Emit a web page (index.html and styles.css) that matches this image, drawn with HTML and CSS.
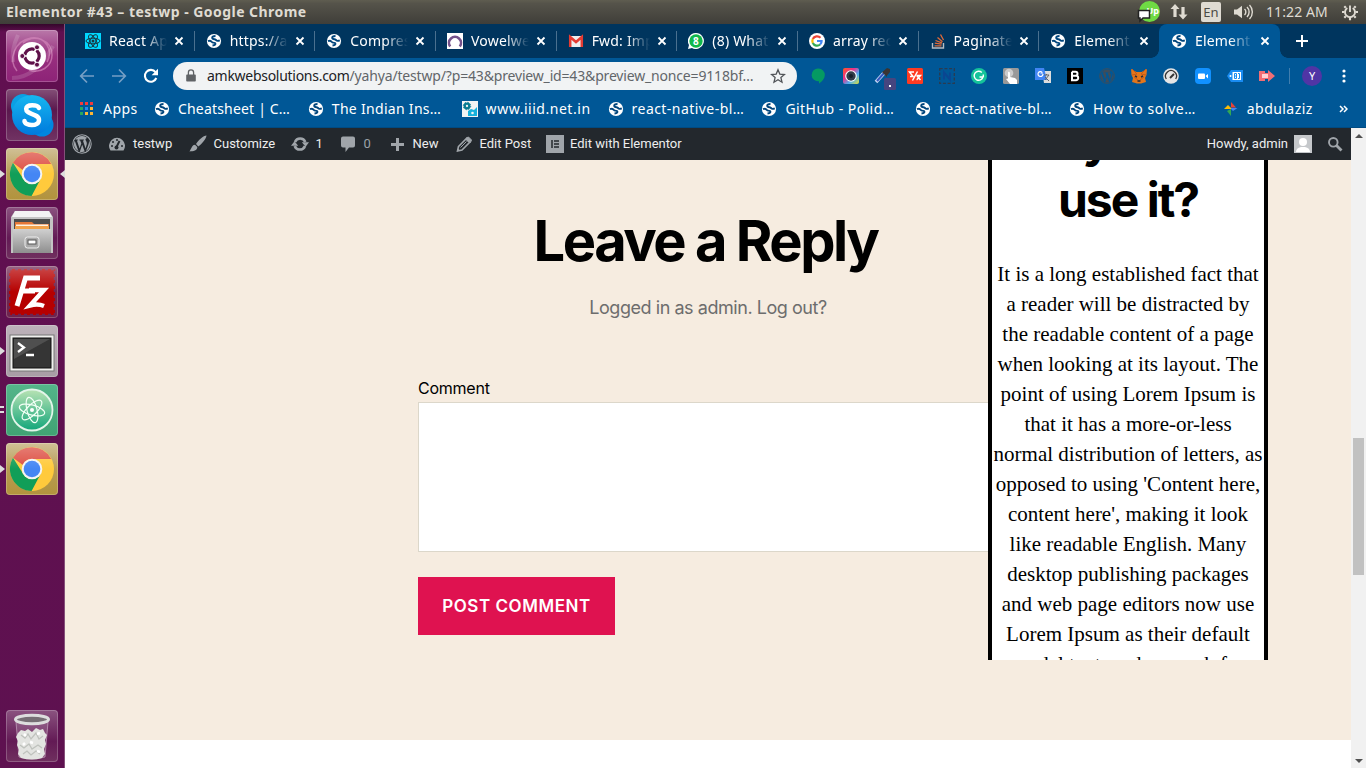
FILE: index.html
```html
<!DOCTYPE html>
<html lang="en">
<head>
<meta charset="utf-8">
<title>Elementor #43 – testwp</title>
<link rel="stylesheet" href="styles.css">
</head>
<body>
<svg class="defs" width="0" height="0">
  <defs>
    <linearGradient id="gloss" x1="0" y1="0" x2="0" y2="1"><stop offset="0" stop-color="#fff" stop-opacity=".3"/><stop offset=".5" stop-color="#fff" stop-opacity="0"/></linearGradient>
    <linearGradient id="sky" x1="0" y1="0" x2="0" y2="1"><stop offset="0" stop-color="#16b7f0"/><stop offset="1" stop-color="#0079dc"/></linearGradient>
    <linearGradient id="steel" x1="0" y1="0" x2="0" y2="1"><stop offset="0" stop-color="#d0d0d0"/><stop offset="1" stop-color="#8e8e8e"/></linearGradient>
    <linearGradient id="mint" x1="0" y1="0" x2="0" y2="1"><stop offset="0" stop-color="#b9e3b4"/><stop offset="1" stop-color="#12a67a"/></linearGradient>
    <linearGradient id="rainbow" x1="0" y1="0" x2="1" y2="1"><stop offset="0" stop-color="#ff5a1f"/><stop offset=".35" stop-color="#f02f86"/><stop offset=".65" stop-color="#48b0f5"/><stop offset="1" stop-color="#e6df35"/></linearGradient>
    <symbol id="globe" viewBox="0 0 16 16"><circle cx="8" cy="8" r="7.1" fill="#fff"/><path d="M2 8.200c1.700-.9 3-.4 3.500.500.500 1.100 1.700 1.200 2.800 1.200 1.200 0 1.400 1 .8 1.700-.6.7-1.700.8-2.600.9M9.500 3C8 3 6.200 3.400 6.200 4.800c0 1.200 1.300 1.400 2.300 1.400 1.300 0 1.600 1.500 3 1.700.8.1 1.600-.2 2.300-.500" fill="none" stroke="#00457c" stroke-width="1.900"/></symbol>
    <symbol id="close" viewBox="0 0 10 10"><path d="M1.500 1.500l7 7M8.500 1.500l-7 7" stroke="#fff" stroke-width="1.800"/></symbol>
    <symbol id="wp" viewBox="0 0 20 20"><circle cx="10" cy="10" r="9.200" fill="none" stroke="currentColor" stroke-width="1.100"/><path fill="currentColor" d="M10 2a8 8 0 0 0-6.700 3.600h2.500v.8h-.9l2.700 8 1.700-5-1.100-3h-.8v-.8h4.500v.8h-1l2.700 8 1-3.600c.6-2-.1-3-.8-4.200-.8-1.400.1-2.700 1.500-2.700A8 8 0 0 0 10 2zM2.700 6.600A8 8 0 0 0 6.500 17.200zM10.200 10.700l-2.400 7a8 8 0 0 0 4.900-.1zM17 6.200c.3 1.700-.1 3-.7 4.700l-2.300 6A8 8 0 0 0 17 6.200z"/></symbol>
    <symbol id="chrome" viewBox="0 0 52 52"><circle cx="26" cy="26" r="22" fill="#ffca3c"/><path d="M7 14.800A22 22 0 0 1 45.200 16H26a10 10 0 0 0-9.200 6z" fill="#dd4f43"/><path d="M7 14.800A22 22 0 0 0 25.600 48l9-17a10 10 0 0 1-17.500-.2z" fill="#119e58"/><circle cx="26" cy="26" r="10.300" fill="#f4f4f4"/><circle cx="26" cy="26" r="8.300" fill="#4486f4"/></symbol>
  </defs>
</svg>

<div class="desktop">
  <header class="panel">
    <span class="window-title">Elementor #43 – testwp - Google Chrome</span>
    <div class="indicators">
      <svg class="ind-up" viewBox="0 0 24 24"><circle cx="12.500" cy="11.500" r="10.500" fill="#6fda44"/><text x="9.500" y="14" class="up-text">Up</text><path d="M1.500 10.500h11v7.500H6l-3 3v-3H1.500z" fill="#fff" stroke="#222" stroke-width="1.500"/></svg>
      <svg class="ind-net" viewBox="0 0 20 20" fill="#dfdbd2"><path d="M6 2l4.500 5H7.600v8H4.400V7H1.500zM14 17.500l4.500-5h-2.900V5h-3.200v7.500H9.500z"/></svg>
      <span class="ind-lang">En</span>
      <svg class="ind-vol" viewBox="0 0 22 18"><path d="M1 6.500h3L9 2.800v12.400L4 11.500H1z" fill="#dfdbd2"/><path d="M11.500 6a4 4 0 0 1 0 6M14 4a7 7 0 0 1 0 10M16.500 2a10 10 0 0 1 0 14" fill="none" stroke="#dfdbd2" stroke-width="1.400"/></svg>
      <span class="clock">11:22 AM</span>
      <svg class="ind-gear" viewBox="0 0 18 18" fill="none" stroke="#dfdbd2"><path d="M6.300 5A5 5 0 1 0 11.700 5M9 2.500V9" stroke-width="1.900"/><path d="M3.300 3.300l1.500 1.500M14.700 3.300l-1.500 1.500M1 9h2.500M14.500 9H17M3.300 14.700l1.500-1.500M14.700 14.700l-1.500-1.500M9 14v3.300" stroke-width="2.100"/></svg>
    </div>
  </header>

  <aside class="launcher">
    <div class="tile ubuntu"><svg viewBox="0 0 52 52"><path d="M11 41C2 30 8 11 25 8c14-2 23 12 16 24M17 13c11-10 29-3 29 12 0 12-12 19-23 15" fill="none" stroke="#d58abd" stroke-opacity=".65" stroke-width="1.500"/><path d="M6 48Q30 48 47 16M12 5q-7 15-5 27" fill="none" stroke="#fff" stroke-opacity=".14" stroke-width="4"/><circle cx="26" cy="26" r="14" fill="#fff"/><circle cx="26" cy="26" r="7.200" fill="none" stroke="#5e1049" stroke-width="3.200"/><path d="M26 26L12 26M26 26L33 14M26 26L33 38" stroke="#fff" stroke-width="1.600"/><circle cx="26" cy="26" r="5" fill="#fff"/><g fill="#5e1049" stroke="#fff" stroke-width=".9"><circle cx="16.300" cy="26" r="2.500"/><circle cx="31" cy="17.300" r="2.500"/><circle cx="31" cy="34.700" r="2.500"/></g></svg></div>
    <div class="tile skype"><svg viewBox="0 0 52 52"><circle cx="17" cy="17" r="12" fill="#0ba0e4"/><circle cx="36" cy="36" r="11.500" fill="#0086df"/><circle cx="26" cy="26" r="20" fill="url(#sky)"/><path d="M33 19c-1.500-3.200-12.500-4.200-12.800 1C20 26 33 24 33 31c0 7-14 6.300-14.500 1" fill="none" stroke="#fff" stroke-width="4.500" stroke-linecap="round"/></svg></div>
    <div class="tile gold"><svg viewBox="0 0 52 52"><use href="#chrome"/><rect width="52" height="52" fill="url(#gloss)"/></svg><i class="run"></i><i class="focus"></i></div>
    <div class="tile files"><svg viewBox="0 0 52 52"><path d="M9 4h34l4 6v36H5V10z" fill="#c4c4c4"/><path d="M9 4h34l3 6H6z" fill="#f3f3f3"/><path d="M8 12h36v12H8z" fill="#4d4d4d"/><path d="M9 15h17l2 2h15v8H9z" fill="#e47737"/><path d="M10 17.500h32v6H10z" fill="#fff3e2"/><path d="M9 19h34v4H9z" fill="#f2a34c"/><path d="M7 22h38v24H7z" fill="url(#steel)"/><rect x="19" y="30" width="14" height="11" rx="2.500" fill="#aaa" stroke="#eee"/><rect x="22" y="33" width="8" height="4" fill="#fff" stroke="#555"/></svg></div>
    <div class="tile zilla"><svg viewBox="0 0 52 52"><path d="M3 3h46v46H3z" fill="#b60000" stroke="#6e244f" stroke-width="2.500" stroke-dasharray="3 3"/><path d="M34 12H19.500L11 40M15 25h14" fill="none" stroke="#fff" stroke-width="5"/><path d="M23 24h15L24 39.500q8-2 14 .5" fill="none" stroke="#fff" stroke-width="4.500"/><rect width="52" height="52" fill="url(#gloss)"/></svg></div>
    <div class="tile term"><svg viewBox="0 0 52 52"><rect x="4" y="10" width="44" height="36" fill="#f0f0ee" stroke="#777"/><rect x="7" y="13" width="38" height="30" fill="#353535" stroke="#111"/><path d="M8 14h36L8 34z" fill="#fff" fill-opacity=".13"/><path d="M12 18l6 4.500-6 4.500M20 30h8" fill="none" stroke="#fff" stroke-width="2.300"/></svg><i class="run"></i></div>
    <div class="tile atom"><svg viewBox="0 0 52 52"><circle cx="26" cy="26" r="20.500" fill="url(#mint)" stroke="#e2f5e9" stroke-width="1.800"/><g fill="none" stroke="#f1fff5" stroke-width="1.200"><ellipse cx="26" cy="26" rx="13" ry="5" transform="rotate(15 26 26)"/><ellipse cx="26" cy="26" rx="13" ry="5" transform="rotate(75 26 26)"/><ellipse cx="26" cy="26" rx="13" ry="5" transform="rotate(-45 26 26)"/></g><circle cx="26" cy="26" r="2" fill="#fff"/></svg><i class="pair"></i></div>
    <div class="tile gold"><svg viewBox="0 0 52 52"><use href="#chrome"/><rect width="52" height="52" fill="url(#gloss)"/></svg><i class="run"></i></div>
    <div class="tile trash"><svg viewBox="0 0 52 52"><path d="M10 12l3 35q13 4 26 0l3-35z" fill="#fff" fill-opacity=".14" stroke="#d4b7ce" stroke-opacity=".6"/><path d="M12 23l3-3 4 1 3-2 4 3 4-4 4 2 3-1 2 4 2 2-2 5 1 4-2 5 1 5-3 4q-10 3-21 0l-3-4 1-4-2-5 1-4-2-4z" fill="#e3e4e1"/><path d="M15 25l4 3 3-4 3 5 5-6 3 6 4-3M14 35l4 3 5-4 3 5 6-4 4 3M17 44l4-3 4 4 5-4 4 3" fill="none" stroke="#bfc2bd" stroke-width="1.300"/><path d="M18 24l2 2M31 24l3-1M19 33l-2 2M31 41l3 1M24 32l3 1" stroke="#fff" stroke-width="2.500"/><ellipse cx="26" cy="9.500" rx="16.500" ry="4.200" fill="#766e74" stroke="#ddd" stroke-width="3"/></svg></div>
  </aside>

  <main class="browser">
    <nav class="tabs">
      <div class="tab"><svg class="fav" viewBox="0 0 16 16"><path fill="#00d8ff" d="M0 0h16v16H0z"/><g fill="none" stroke="#183642" stroke-width="1"><ellipse cx="8" cy="8" rx="7" ry="2.800"/><ellipse cx="8" cy="8" rx="7" ry="2.800" transform="rotate(60 8 8)"/><ellipse cx="8" cy="8" rx="7" ry="2.800" transform="rotate(120 8 8)"/></g><circle cx="8" cy="8" r="1.500" fill="#183642"/></svg><span>React Ap</span><svg class="x"><use href="#close"/></svg></div>
      <div class="tab"><svg class="fav"><use href="#globe"/></svg><span>https://a</span><svg class="x"><use href="#close"/></svg></div>
      <div class="tab"><svg class="fav"><use href="#globe"/></svg><span>Compres</span><svg class="x"><use href="#close"/></svg></div>
      <div class="tab"><svg class="fav" viewBox="0 0 16 16"><path fill="#fff" d="M0 0h16v16H0z"/><path d="M3.200 13.500A6 6 0 1 1 12.800 13.500" fill="none" stroke="#75528b" stroke-width="2.600"/></svg><span>Vowelwe</span><svg class="x"><use href="#close"/></svg></div>
      <div class="tab"><svg class="fav" viewBox="0 0 16 16"><path fill="#eee" d="M1 3h14v11H1z"/><path d="M2.200 14V4L8 9l5.800-5v10" fill="none" stroke="#e53b32" stroke-width="2.500"/></svg><span>Fwd: Imp</span><svg class="x"><use href="#close"/></svg></div>
      <div class="tab"><svg class="fav" viewBox="0 0 16 16"><path d="M8 0a8 8 0 1 1-4 15L0 16l1-4A8 8 0 0 1 8 0z" fill="#fff"/><circle cx="8" cy="8" r="6.700" fill="#10b84b"/><text x="5" y="11.500" class="badge-eight">8</text></svg><span>(8) What</span><svg class="x"><use href="#close"/></svg></div>
      <div class="tab"><svg class="fav" viewBox="0 0 16 16"><circle cx="8" cy="8" r="8" fill="#fff"/><g fill="none" stroke-width="2.200"><path d="M11.500 4.800A4.700 4.700 0 0 0 3.800 6" stroke="#ea4335"/><path d="M3.800 6a4.700 4.700 0 0 0 0 4" stroke="#fbbc05"/><path d="M3.800 10a4.700 4.700 0 0 0 7.300 1.500" stroke="#34a853"/><path d="M11.100 11.500A4.500 4.500 0 0 0 12.600 8H8" stroke="#4285f4"/></g></svg><span>array rec</span><svg class="x"><use href="#close"/></svg></div>
      <div class="tab"><svg class="fav" viewBox="0 0 16 16" fill="none"><path d="M2.500 10v5h11v-5" stroke="#b6bcc2" stroke-width="1.400"/><path d="M4.500 12.800h7M4.800 10.200l6.800.9M5.500 7.500l6.400 2.300M7.500 4.500l5 4.200M10.500 1.500l3 5.500" stroke="#e06a38" stroke-width="1.300"/></svg><span>Paginate</span><svg class="x"><use href="#close"/></svg></div>
      <div class="tab"><svg class="fav"><use href="#globe"/></svg><span>Element</span><svg class="x"><use href="#close"/></svg></div>
      <div class="tab active"><svg class="fav"><use href="#globe"/></svg><span>Element</span><svg class="x"><use href="#close"/></svg></div>
      <svg class="plus" viewBox="0 0 12 12"><path d="M6 0v12M0 6h12" stroke="#fff" stroke-width="2"/></svg>
    </nav>

    <div class="toolbar">
      <svg class="nav" viewBox="0 0 16 16"><path d="M15 8H2M8 1.500L1.700 8 8 14.500" fill="none" stroke="#759fc5" stroke-width="1.700"/></svg>
      <svg class="nav" viewBox="0 0 16 16"><path d="M1 8h13M8 1.500L14.300 8 8 14.500" fill="none" stroke="#759fc5" stroke-width="1.700"/></svg>
      <svg class="nav" viewBox="0 0 16 16"><path d="M13.300 10A5.900 5.900 0 1 1 12.500 4.200" fill="none" stroke="#fff" stroke-width="2.100"/><path d="M15 .8v6.400H8.600z" fill="#fff"/></svg>
      <div class="omnibox">
        <svg class="lock" viewBox="0 0 10 14"><path d="M1 5.500h8a.8.8 0 0 1 .8.800v5.400a.8.8 0 0 1-.8.800H1a.8.8 0 0 1-.8-.8V6.300a.8.8 0 0 1 .8-.8z" fill="#606366"/><path d="M2.400 6V3.500a2.600 2.600 0 0 1 5.200 0V6" fill="none" stroke="#606366" stroke-width="1.300"/></svg>
        <span class="url"><b>amkwebsolutions.com</b>/yahya/testwp/?p=43&amp;preview_id=43&amp;preview_nonce=9118bf…</span>
        <svg class="star" viewBox="0 0 16 16"><path d="M8 1.800l1.800 4.300 4.700.4-3.600 3.100 1.100 4.600L8 11.800l-4 2.400 1.100-4.600-3.600-3.100 4.700-.4z" fill="none" stroke="#505357" stroke-width="1.300"/></svg>
      </div>
      <div class="extensions">
        <svg viewBox="0 0 16 16"><path d="M7.500.5a6.300 6.300 0 0 1 6.300 6.500c0 3.800-3 6.500-5.800 8.700v-2.500A6.400 6.400 0 1 1 7.500.5z" fill="#059a62"/></svg>
        <svg viewBox="0 0 16 16"><rect width="16" height="16" rx="2" fill="url(#rainbow)"/><circle cx="8" cy="8" r="5.800" fill="#fff"/><circle cx="8" cy="8" r="4.700" fill="#333d4a"/><circle cx="8" cy="8" r="2" fill="#17202b"/></svg>
        <svg viewBox="0 0 16 16"><path d="M1 14L9 5" stroke="#c9d8f5" stroke-width="3.500"/><path d="M2 13l7-8" stroke="#3458bd" stroke-width="2"/><path d="M7 4l1.500-1L12 0l3 1v3l-3 3.500v1.500z" fill="#3a3432"/><rect x="9" y="10" width="12" height="12" rx="1.500" fill="#46457f"/><path d="M14 17h2v2h-2z" fill="#fff"/></svg>
        <svg viewBox="0 0 16 16"><rect width="16" height="16" rx="1.500" fill="#ff3b22"/><path d="M7 4H2.500l3.500 4.500H3M5.500 12.500l5-9M9.500 7.500h4l-3.500 4h-.500M10 8l3.500 4" fill="none" stroke="#fff" stroke-width="1.500"/></svg>
        <svg viewBox="0 0 16 16"><path d="M.7.700h14.600v14.600H.7z" fill="none" stroke="#2a3b50" stroke-width="1.300" stroke-dasharray="3 1.700"/><path d="M5 11.500V4.500l6 7v-7" fill="none" stroke="#0a4691" stroke-width="2"/></svg>
        <svg viewBox="0 0 16 16"><circle cx="8" cy="8" r="8" fill="#15c39a"/><path d="M10.800 4.500A4.500 4.500 0 1 0 12 9H8.500M12.300 6.500V9" fill="none" stroke="#fff" stroke-width="1.400"/></svg>
        <svg viewBox="0 0 16 16"><rect width="16" height="16" rx="1.500" fill="#999"/><circle cx="6" cy="5" r="4.300" fill="#ccc"/><path d="M5 4q1.500-1 2 1v4l5 1 2 2v4H7L3 11l2-.5z" fill="#fff"/></svg>
        <svg viewBox="0 0 16 16"><path fill="#ddd" d="M7 3h9v12H9z"/><path fill="#4285f4" d="M0 0h9l3 12H0z"/><path d="M8 5H5.500M7 4A2.500 2.500 0 1 0 8 6" fill="none" stroke="#fff" stroke-width="1.200"/><path d="M9 7h5M11.500 6v1M10 12l4-5M10 9l4 4" stroke="#666"/></svg>
        <svg viewBox="0 0 16 16"><path d="M0 0h16v16H0z"/><path d="M5 3.800h3.500a2 2 0 0 1 0 4H5m0 0h4a2.200 2.200 0 0 1 0 4.400H5zV3.800" fill="none" stroke="#fff" stroke-width="2"/></svg>
        <svg class="wp-dim"><use href="#wp"/></svg>
        <svg viewBox="0 0 16 16"><path d="M0 1l5.500 3h5L16 1l-.5 6-1.500 3 1 4-5 1.500H6L1 14l1-4L.5 7z" fill="#e2761b"/><path d="M1 1l5 5-5 1M15 1l-5 5 5 1M3 9l4 3M13 9l-4 3" fill="none" stroke="#c95a16"/><path d="M4 8l2 1M12 8l-2 1M6.500 13h3" stroke="#252a3a" stroke-width="1.400"/></svg>
        <svg viewBox="0 0 16 16"><circle cx="8" cy="8" r="7.800" fill="#e5e5e5"/><path d="M3.300 11A5.500 5.500 0 1 1 12.700 11" fill="none" stroke="#333" stroke-width="1.300"/><path d="M7 10l4-4" stroke="#333" stroke-width="2"/></svg>
        <svg viewBox="0 0 16 16"><rect width="16" height="16" rx="4" fill="#1191ff"/><rect x="3" y="5.500" width="7" height="5.500" rx="1" fill="#fff"/><path d="M10.500 8L13 6v4.500z" fill="#fff"/></svg>
        <svg viewBox="0 0 16 16"><path d="M4 2h12v12H4L0 8z" fill="#198cf2"/><path fill="#fff" d="M5.500 4H14v8H5.500z"/><path d="M7.500 5.500h2v5h-2zM7.500 8h2M11 5.500h1.500v5H11" fill="none" stroke="#198cf2"/><circle cx="3.500" cy="8" r="1" fill="#fff"/></svg>
        <svg viewBox="0 0 16 16"><path fill="#f26e75" d="M0 3h6v2h3V2l7 6-7 6v-3H6v2H0z"/><path d="M3 6h6v4H3z" fill="#ffd0d2"/></svg>
      </div>
      <span class="avatar">Y</span>
      <svg class="kebab" viewBox="0 0 4 14" fill="#fff"><circle cx="2" cy="2" r="1.600"/><circle cx="2" cy="7" r="1.600"/><circle cx="2" cy="12" r="1.600"/></svg>
    </div>

    <div class="bookmarks">
      <a class="bm b0"><svg viewBox="0 0 16 16"><path fill="#f23b3b" d="M1 1h3v3H1zM6 1h3v3H6zM11 1h3v3h-3z"/><path fill="#28a75d" d="M1 6h3v3H1zM1 11h3v3H1z"/><path fill="#2588ef" d="M6 6h3v3H6z"/><path fill="#fbb636" d="M11 6h3v3h-3zM6 11h3v3H6zM11 11h3v3h-3z"/></svg><span>Apps</span></a>
      <a class="bm b1"><svg><use href="#globe"/></svg><span>Cheatsheet | C…</span></a>
      <a class="bm b2"><svg><use href="#globe"/></svg><span>The Indian Ins…</span></a>
      <a class="bm b3"><svg viewBox="0 0 16 16"><path fill="#f3f3f3" d="M0 0h16v16H0z"/><circle cx="5" cy="5" r="2.300" fill="none" stroke="#087b92" stroke-width="2.300"/><circle cx="5" cy="5" r="3.700" fill="none" stroke="#087b92" stroke-width="1" stroke-dasharray="1.400 1.500"/><path d="M6 10l3-2 3 1 3-3v9H6z" fill="#16b1dc"/><circle cx="10.500" cy="12" r="1.300" fill="#f3f3f3"/></svg><span>www.iiid.net.in</span></a>
      <a class="bm b4"><svg><use href="#globe"/></svg><span>react-native-bl…</span></a>
      <a class="bm b5"><svg><use href="#globe"/></svg><span>GitHub - Polid…</span></a>
      <a class="bm b6"><svg><use href="#globe"/></svg><span>react-native-bl…</span></a>
      <a class="bm b7"><svg><use href="#globe"/></svg><span>How to solve…</span></a>
      <a class="bm b8"><svg viewBox="0 0 16 16"><path fill="#ea4335" d="M8 1l5 5.500H8z"/><path fill="#4285f4" d="M8 7h6.500L10 10 8 8z"/><path fill="#34a853" d="M8 8v7L4 10z"/><path fill="#fbbc05" d="M1 8l4-4 3 3v1z"/></svg><span>abdulaziz</span></a>
      <svg class="more" viewBox="0 0 9 8"><path d="M1 1l3 3-3 3M5 1l3 3-3 3" fill="none" stroke="#fff" stroke-width="1.500"/></svg>
    </div>

    <div class="viewport">
      <div class="site">
        <div class="adminbar">
          <a class="ab a0"><svg viewBox="0 0 20 20"><use href="#wp"/></svg></a>
          <a class="ab a1"><svg viewBox="0 0 20 20"><path d="M3.500 16.500A8 8 0 1 1 16.500 16.500z" fill="currentColor"/><path d="M9 14l3.500-7" stroke="#23282d" stroke-width="2"/><g fill="#23282d"><circle cx="9.500" cy="13.500" r="2"/><circle cx="5" cy="12" r="1"/><circle cx="6" cy="8" r="1"/><circle cx="10" cy="6" r="1"/><circle cx="15" cy="12" r="1"/></g></svg><span>testwp</span></a>
          <a class="ab a2"><svg viewBox="0 0 20 20" fill="currentColor"><path d="M18.500 1.500c-3 0-8.500 5-10.500 8.500l2.300 2.400c3.500-2.400 8-7.400 8.200-10.900zM7 10.800c-3 0-3 3-5.500 6.700 4 0 7.800-.7 7.800-4.400z"/></svg><span>Customize</span></a>
          <a class="ab a3"><svg viewBox="0 0 20 20"><path d="M5 8A5.500 5.500 0 0 1 15.300 8M15 12A5.500 5.500 0 0 1 4.700 12" fill="none" stroke="currentColor" stroke-width="2.600"/><path fill="currentColor" d="M11.800 8.300h7.200l-3.300 4.500zM1 11.700h7.200L4.500 7.200z"/></svg><span>1</span></a>
          <a class="ab a4"><svg viewBox="0 0 20 20"><path d="M5 2.500h10a2 2 0 0 1 2 2v7a2 2 0 0 1-2 2h-4L7.500 18v-4.500H5a2 2 0 0 1-2-2v-7a2 2 0 0 1 2-2z" fill="currentColor"/></svg><span>0</span></a>
          <a class="ab a5"><svg viewBox="0 0 20 20"><path d="M10.500 4v13M4 10.500h13" stroke="currentColor" stroke-width="3"/></svg><span>New</span></a>
          <a class="ab a6"><svg viewBox="0 0 20 20"><path d="M4.500 12.500l7.500-7.500 3.500 3.500-7.500 7.500-4.500 1z" fill="none" stroke="currentColor" stroke-width="1.600"/><path d="M12 4l4.500 4.500 1-2.500-3-3zM6.500 13.500l6-6" fill="currentColor" stroke="currentColor"/><path d="M3 17.500l3-1-2-2z" fill="currentColor"/></svg><span>Edit Post</span></a>
          <a class="ab a7"><svg viewBox="0 0 18 18"><path fill="currentColor" d="M0 0h18v18H0z"/><path d="M6 5v8M8 6h5M8 9h5M8 12h5" stroke="#23282d" stroke-width="1.500"/></svg><span>Edit with Elementor</span></a>
          <div class="account"><span>Howdy, admin</span><svg class="person" viewBox="0 0 18 18"><path fill="#c5c8cb" d="M0 0h18v18H0z"/><circle cx="9" cy="7" r="4" fill="#fff"/><path d="M2 17q0-4 5-5h4q5 1 5 5z" fill="#fff"/></svg><svg class="search" viewBox="0 0 16 16" fill="none" stroke="#a0a5aa"><circle cx="6.300" cy="6.300" r="4.300" stroke-width="1.900"/><path d="M9.500 9.500l5 5" stroke-width="2.800"/></svg></div>
        </div>
        <div class="page">
          <section class="reply">
            <h2>Leave a Reply</h2>
            <p class="logged">Logged in as admin. Log out?</p>
            <label>Comment</label>
            <div class="textarea"></div>
            <span class="submit">POST COMMENT</span>
          </section>
          <section class="about">
            <h2>Why do we<br>use it?</h2>
            <p>It is a long established fact that<br>a reader will be distracted by<br>the readable content of a page<br>when looking at its layout. The<br>point of using Lorem Ipsum is<br>that it has a more-or-less<br>normal distribution of letters, as<br>opposed to using 'Content here,<br>content here', making it look<br>like readable English. Many<br>desktop publishing packages<br>and web page editors now use<br>Lorem Ipsum as their default<br>model text, and a search for</p>
          </section>
        </div>
      </div>
      <div class="scrollbar"><i class="up"></i><i class="thumb"></i><i class="down"></i></div>
    </div>
  </main>
</div>
</body>
</html>
```
FILE: styles.css
```css
* { box-sizing: border-box; }
body { margin: 0; overflow: hidden; background: #fff; }
svg { display: block; flex: none; }
.defs { position: absolute; }
.desktop { display: grid; grid-template: 24px 744px / 65px 1301px; width: 1366px; height: 768px; overflow: hidden; }

/* top panel */
.panel { grid-column: 1 / 3; display: flex; justify-content: space-between; align-items: center; padding: 0 6px; background: linear-gradient(#5f5d50, #55534a 15%, #3f3e39); color: #dfdbd2; font: 14px/24px "Noto Sans", sans-serif; }
.window-title { font-weight: 700; font-size: 14px; letter-spacing: .46px; white-space: nowrap; }
.indicators { display: flex; align-items: center; }
.ind-up { width: 24px; height: 24px; margin-right: 8px; }
.up-text { font: 700 9px "Noto Sans", sans-serif; fill: #fff; }
.ind-net { width: 20px; height: 20px; margin-right: 12px; }
.ind-lang { width: 20px; height: 20px; margin-right: 12px; border-radius: 2px; background: #dfdbd2; color: #4c4b45; font-size: 13px; line-height: 20px; text-align: center; }
.ind-vol { width: 22px; height: 18px; margin-right: 11px; }
.clock { width: 62px; margin-right: 13px; white-space: nowrap; font-size: 14px; letter-spacing: .1px; }
.ind-gear { width: 18px; height: 18px; margin-right: 1px; }

/* launcher */
.launcher { display: flex; flex-direction: column; gap: 7px; padding: 6px 7px 6px 6px; background: linear-gradient(#35072b, #610f50 8px, #5e1150); border-right: 1px solid #85507a; }
.tile { position: relative; width: 52px; height: 52px; flex: none; border-radius: 4px; box-shadow: inset 0 0 0 1px rgba(255,255,255,.22); }
.tile svg { width: 52px; height: 52px; border-radius: 4px; }
.ubuntu { background: linear-gradient(#b978a9, #98307f 50%, #8d2377); }
.skype { background: linear-gradient(#845078, #5b184e 40%, #713363); }
.gold { background: linear-gradient(#bda669, #b2933d); }
.files, .trash { background: linear-gradient(#8b5380, #631a55 60%, #70305f); }
.zilla { background: #6e244f; }
.term { background: linear-gradient(#bdb2ba, #a89da5); }
.atom { background: linear-gradient(#54b58a, #40a273); }
.trash { margin-top: auto; }
.run, .focus { position: absolute; top: 22px; border: 4px solid transparent; }
.run { left: -6px; border-left: 5px solid #ddd; border-right: 0; }
.focus { right: -7px; border-right: 5px solid #ddd; border-left: 0; }
.pair { position: absolute; left: -6px; top: 22px; width: 4px; height: 7px; border: solid #ddd; border-width: 2px 0; }

/* browser chrome */
.browser { display: grid; grid-template-rows: 34px 36px 34px 640px; min-width: 0; background: #005796; color: #fff; font: 14px "Noto Sans", sans-serif; }
.tabs { display: flex; padding-left: 8px; background: #00355e; }
.tab { position: relative; flex: none; display: flex; align-items: center; width: 120.67px; padding-left: 12px; }
.tab::after { content: ""; position: absolute; right: -1px; top: 7px; width: 1px; height: 20px; background: #4a708f; }
.tab:nth-child(9)::after, .tab.active::after { display: none; }
.tab .fav { width: 16px; height: 16px; margin-right: 8px; }
.tab span { width: 58px; height: 24px; line-height: 23px; margin-right: 7px; overflow: hidden; white-space: nowrap; letter-spacing: .2px; -webkit-mask-image: linear-gradient(90deg, #000 60%, transparent); mask-image: linear-gradient(90deg, #000 60%, transparent); }
.tab .x { width: 10px; height: 10px; }
.tab.active { background: #005796; border-radius: 8px 8px 0 0; }
.tab.active::before { content: ""; position: absolute; left: -8px; right: -8px; bottom: 0; height: 8px; background: radial-gradient(circle at 0 0, transparent 7.500px, #005796 8px) left / 8px 8px no-repeat, radial-gradient(circle at 100% 0, transparent 7.500px, #005796 8px) right / 8px 8px no-repeat; }
.badge-eight { font: 700 10px "Noto Sans", sans-serif; fill: #fff; }
.plus { width: 12px; height: 12px; margin: 11px 0 0 16px; }
.toolbar { display: flex; align-items: center; padding-left: 14px; }
.nav { width: 16px; height: 16px; margin-right: 16px; }
.nav:nth-child(3) { margin-right: 14px; }
.omnibox { display: flex; align-items: center; width: 624px; height: 28px; border-radius: 14px; padding: 0 11px 0 13px; background: #f1f3f4; color: #62666a; }
.lock { width: 10px; height: 14px; margin-right: 11px; }
.url { width: 560px; white-space: nowrap; line-height: 24px; letter-spacing: -.17px; }
.url b { color: #202124; font-weight: 400; letter-spacing: -.28px; }
.star { width: 16px; height: 16px; margin-left: 3px; }
.extensions { display: flex; gap: 16px; margin-left: 14px; }
.extensions svg { width: 16px; height: 16px; overflow: visible; }
.wp-dim { color: #3d4d5b; }
.avatar { position: relative; width: 20px; height: 20px; margin-left: 27px; border-radius: 50%; background: #5035a5; font-size: 11px; line-height: 20px; text-align: center; }
.avatar::before { content: ""; position: absolute; left: -13px; top: 2px; width: 1px; height: 16px; background: #417eae; }
.kebab { width: 4px; height: 14px; margin-left: 20px; }
.bookmarks { display: flex; align-items: center; padding: 0 0 3px 14px; border-bottom: 1px solid #004b83; }
.bm { display: flex; align-items: center; flex: none; width: 153.800px; white-space: nowrap; line-height: 24px; letter-spacing: .45px; }
.bm svg { width: 16px; height: 16px; margin-right: 8px; }
.b0 { width: 75px; }
.b1 { letter-spacing: .18px; }
.b2 { letter-spacing: .3px; }
.b3 { width: 146px; letter-spacing: .53px; }
.b7 { letter-spacing: .6px; }
.b8 { width: 116px; }
.more { width: 9px; height: 8px; }

/* page viewport */
.viewport { display: grid; grid-template-columns: 1286px 15px; background: #fff; color: #000; }
.site { display: grid; grid-template-rows: 32px 580px 28px; }
.adminbar { display: flex; align-items: center; padding-left: 7px; background: #23282d; color: #eee; font: 13px/32px Roboto, sans-serif; }
.ab { display: flex; align-items: center; flex: none; white-space: nowrap; }
.ab svg { width: 20px; height: 20px; margin-right: 6px; color: #a0a5aa; }
.a0 { width: 35px; }
.a1 { width: 80.500px; }
.a2 { width: 102px; }
.a3 { width: 48px; }
.a4 { width: 49px; color: #9ca2a7; }
.a5 { width: 67px; }
.a6 { width: 92.500px; }
.a7 svg { width: 18px; height: 18px; }
.account { display: flex; align-items: center; margin-left: auto; padding-right: 8px; white-space: nowrap; }
.person { width: 18px; height: 18px; margin: 0 15px 0 6px; }
.search { width: 16px; height: 16px; }
.page { position: relative; background: #f6ece0; font-family: Inter, sans-serif; }
.reply { width: 580px; margin-left: 353px; padding-top: 46px; }
.reply h2 { margin: 0 5px 0 0; font-size: 56px; line-height: 70px; letter-spacing: -2.500px; text-align: center; white-space: nowrap; }
.logged { margin: 17px 0 0; color: #6d6d6d; font-size: 18px; line-height: 30px; letter-spacing: -.45px; text-align: center; }
.reply label { display: block; margin-top: 53px; font-size: 16px; line-height: 24px; letter-spacing: -.24px; }
.textarea { height: 150px; margin-top: 2px; border: 1px solid #dcd7ca; background: #fff; }
.submit { display: block; width: 197px; height: 58px; margin-top: 25px; background: #df1250; color: #fff; font-size: 17px; font-weight: 600; line-height: 58px; text-align: center; letter-spacing: .56px; }
.about { position: absolute; left: 923px; top: 0; width: 280px; height: 500px; overflow: hidden; border: solid #000; border-width: 0 4px; background: #fff; text-align: center; }
.about h2 { margin: -50px 0 0; font-size: 48px; line-height: 60px; letter-spacing: -2px; white-space: nowrap; }
.about p { margin: 29px 0 0; font: 21px/30px "Liberation Serif", serif; white-space: nowrap; }
.scrollbar { display: flex; flex-direction: column; align-items: center; background: #f1f1f1; }
.up, .down { border: 4px solid transparent; }
.up { margin-top: 2px; border-bottom-color: #505050; }
.thumb { width: 11px; height: 137px; margin-top: 300px; background: #c1c1c1; }
.down { margin: auto 0 1px; border-top-color: #505050; }
```
